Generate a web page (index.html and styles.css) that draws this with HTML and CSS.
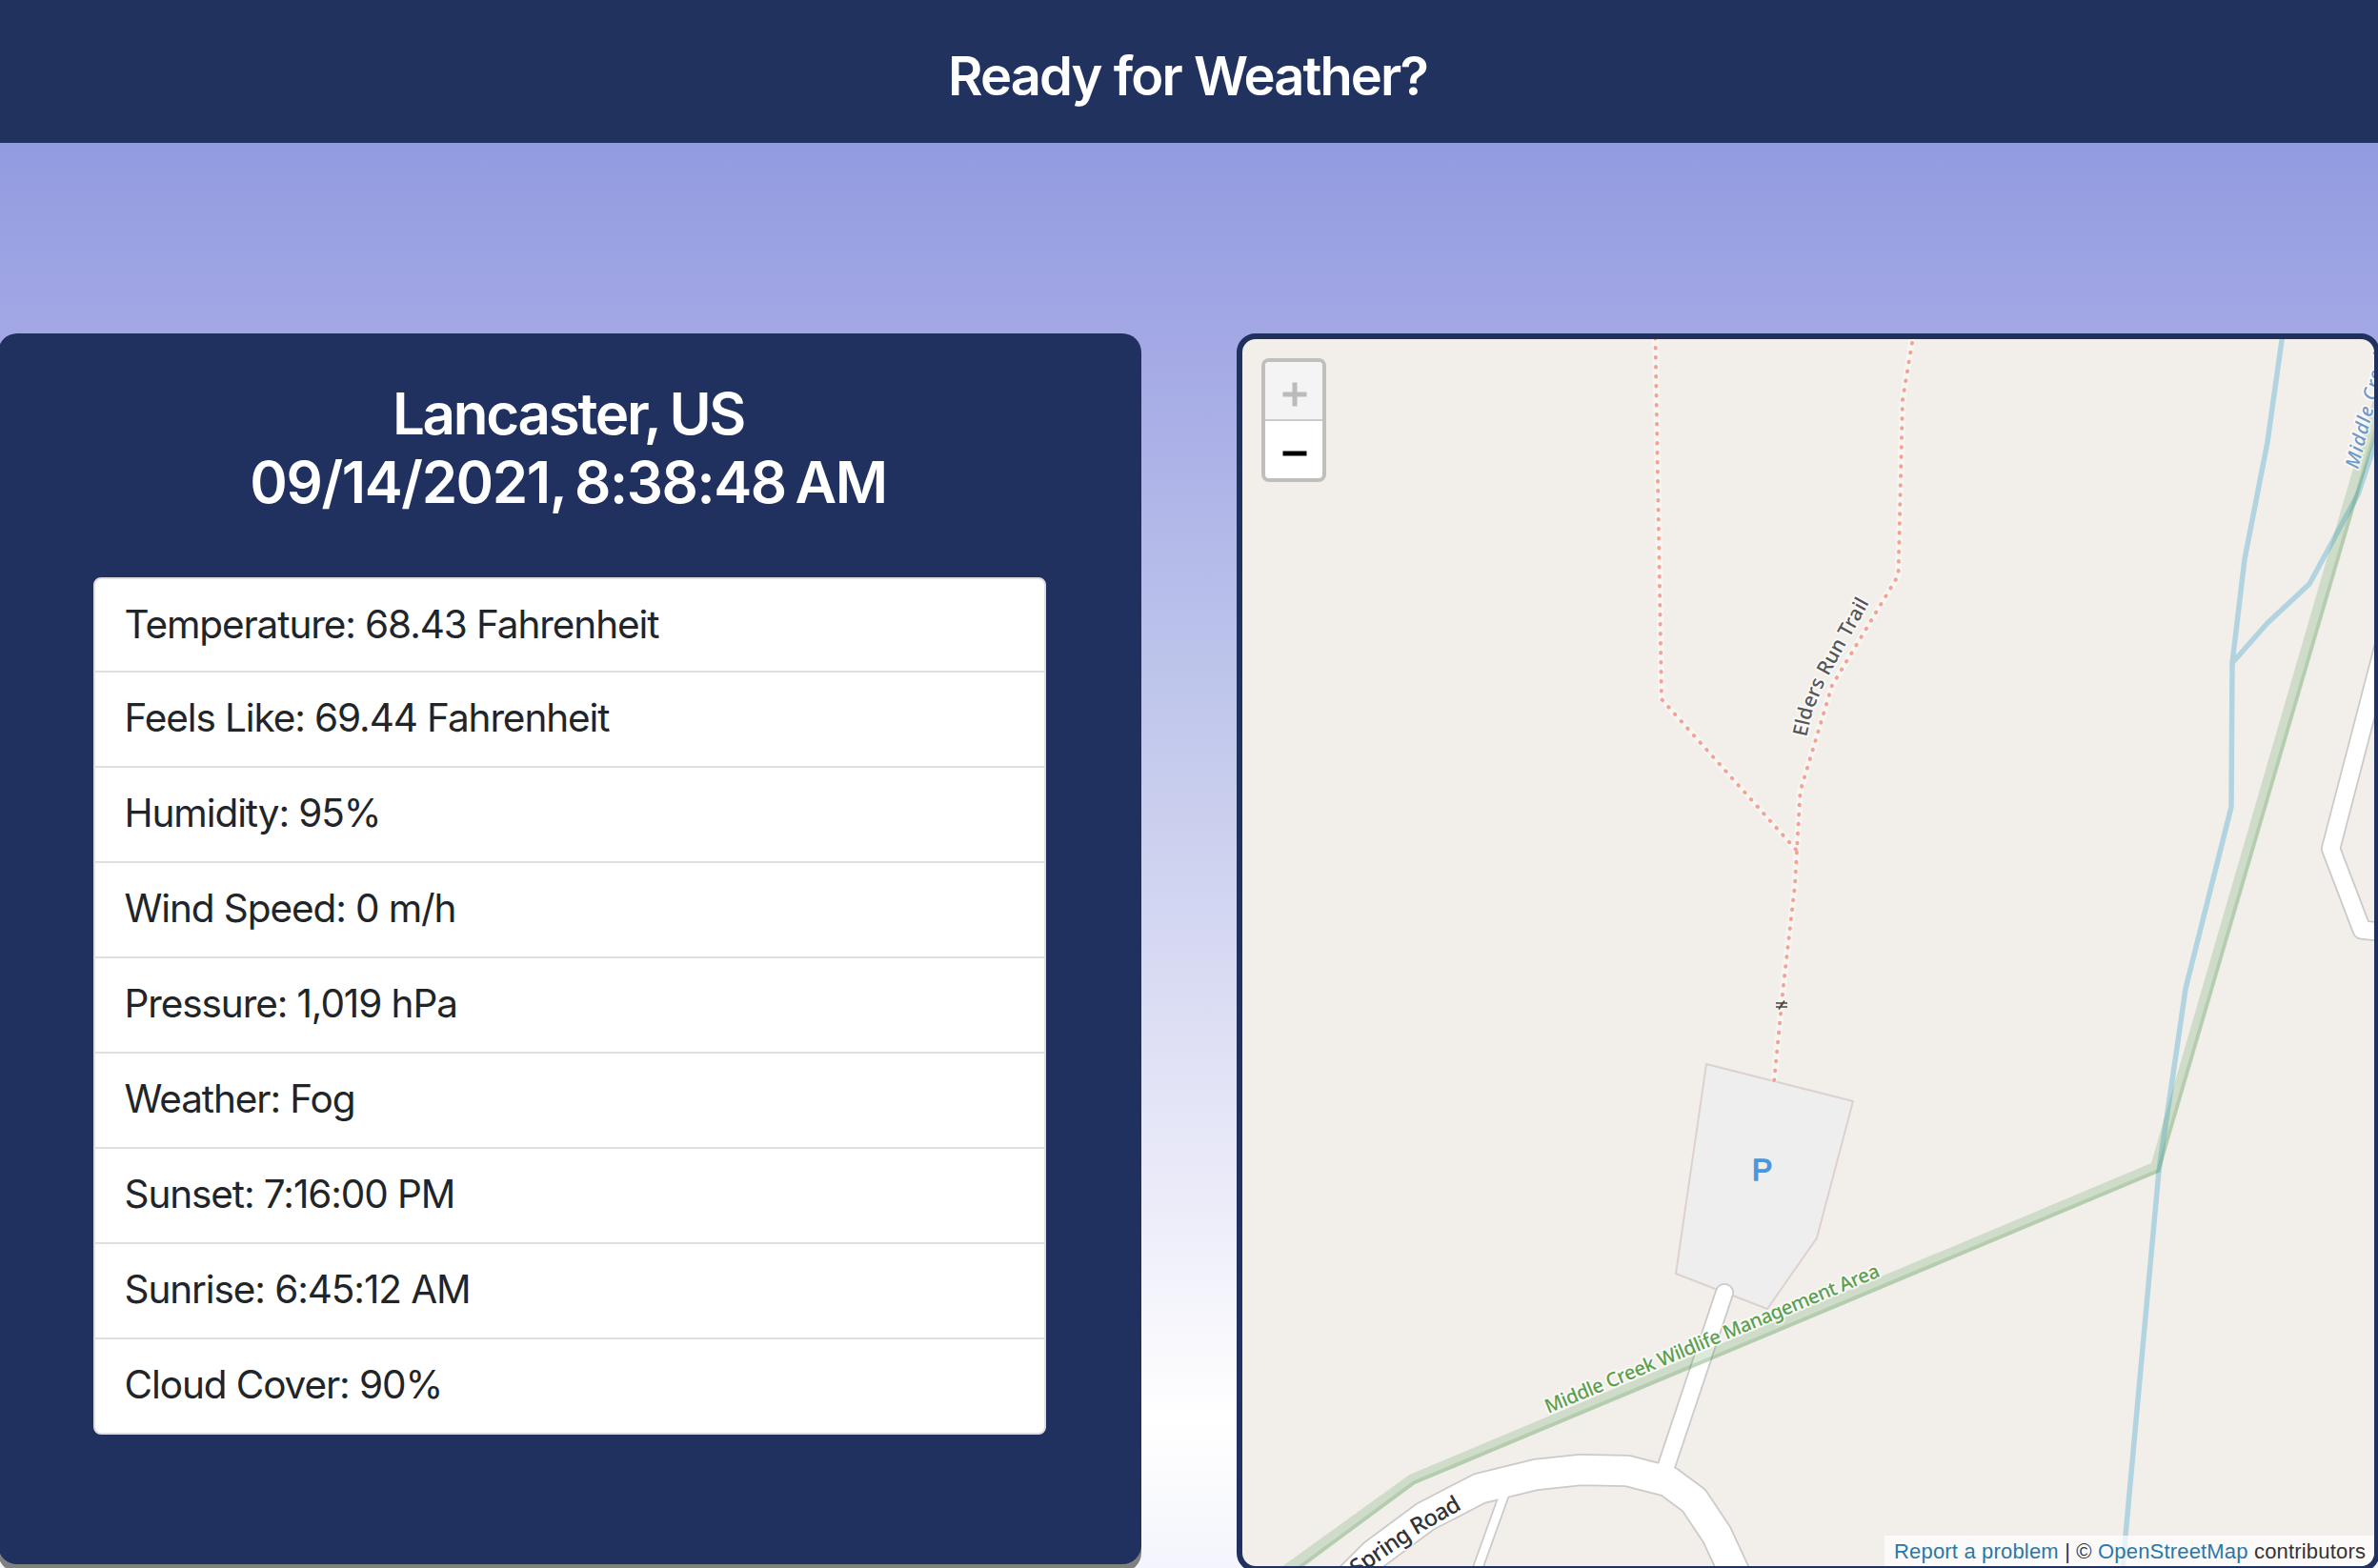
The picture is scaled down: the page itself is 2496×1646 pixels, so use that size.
FILE: index.html
```html
<!DOCTYPE html>
<html lang="en">
<head>
<meta charset="utf-8">
<title>Ready for Weather?</title>
<link rel="stylesheet" href="styles.css">
</head>
<body>
<header class="header"><h1 class="header-title">Ready for Weather?</h1></header>
<main class="content">
  <section class="weather-card">
    <h2 class="weather-heading"><span class="place">Lancaster, US</span><br><span class="date">09/14/2021, 8:38:48 AM</span></h2>
    <ul class="weather-list">
      <li>Temperature: 68.43 Fahrenheit</li>
      <li>Feels Like: 69.44 Fahrenheit</li>
      <li>Humidity: 95%</li>
      <li>Wind Speed: 0 m/h</li>
      <li>Pressure: 1,019 hPa</li>
      <li>Weather: Fog</li>
      <li>Sunset: 7:16:00 PM</li>
      <li>Sunrise: 6:45:12 AM</li>
      <li>Cloud Cover: 90%</li>
    </ul>
  </section>
  <section class="map-card">
    <svg class="map" viewBox="1304 356 1188 1288" preserveAspectRatio="xMinYMin slice">
      <defs>
        <path id="trail-label" d="M1896 774 L1902 748 L1915 717 L1968 622"/>
        <path id="road-label" d="M1424 1655 L1491 1609 L1552 1574"/>
        <path id="area-label" d="M1625 1484 L1985 1335"/>
        <path id="creek-label" d="M2475 493 L2500 395 L2520 320"/>
      </defs>
      <g class="stream">
        <path d="M2396 350 L2380 464 L2356 587 L2343 696 L2342 847 L2294 1038 L2285 1100 L2266 1229 L2231 1612 L2228 1650"/>
        <path d="M2343 696 L2380 654 L2424 613 L2475 519 L2500 445"/>
      </g>
      <path class="parking" d="M1791 1117 L1945 1156 L1907 1299.500 L1855 1374 L1759 1337 Z"/>
      <g class="road-case">
        <path class="w-main" d="M1415 1659 L1442 1632 L1496 1592 L1553 1562.500 L1612 1548 L1659 1543 L1708 1544 L1751 1555 L1778 1575 L1802 1611 L1822 1654"/>
        <path class="w-drive" d="M1810 1357 L1747 1545"/>
        <path class="w-side" d="M1582 1560 L1549 1652"/>
        <path class="w-right" d="M2512 640 L2446.500 891 L2479 976 L2515 980"/>
      </g>
      <g class="road">
        <path class="w-main" d="M1415 1659 L1442 1632 L1496 1592 L1553 1562.500 L1612 1548 L1659 1543 L1708 1544 L1751 1555 L1778 1575 L1802 1611 L1822 1654"/>
        <path class="w-drive" d="M1810 1357 L1747 1545"/>
        <path class="w-side" d="M1582 1560 L1549 1652"/>
        <path class="w-right" d="M2512 640 L2446.500 891 L2479 976 L2515 980"/>
      </g>
      <g class="trail-case">
        <path d="M1737.500 350 L1744 734 L1886 893"/>
        <path d="M2008 350 L1997 419.500 L1992.500 604 L1923 719.500 L1889.500 831 L1886 893 L1884 929 L1872 1034 L1862 1136"/>
      </g>
      <g class="trail">
        <path d="M1737.500 355 L1744 734 L1886 893"/>
        <path d="M2007 360 L1997 419.500 L1992.500 604 L1923 719.500 L1889.500 831 L1886 893 L1884 929 L1872 1034 L1862 1136"/>
      </g>
      <path class="area-band" d="M1353 1655 L1485 1558 L2266.500 1230.500 L2513 390 L2499.500 390 L2258 1221 L1479.500 1548 L1331 1655 Z"/>
      <path class="area-edge" d="M1351 1655 L1484 1556.500 L2265.500 1229 L2511.500 390"/>
      <path class="gate" d="M1864 1053 H1876 M1864 1057 H1876 M1867 1059.500 L1873 1050.500"/>
      <text class="label parking-label" x="1839" y="1239">P</text>
      <text class="label trail-label"><textPath href="#trail-label" textLength="157">Elders Run Trail</textPath></text>
      <text class="label area-label"><textPath href="#area-label" textLength="378">Middle Creek Wildlife Management Area</textPath></text>
      <text class="label road-label"><textPath href="#road-label" textLength="132">Spring Road</textPath></text>
      <text class="label creek-label"><textPath href="#creek-label">Middle Creek</textPath></text>
    </svg>
    <div class="zoom-control">
      <span class="zoom-button disabled"><svg viewBox="0 0 60 60"><path d="M18.500 34H43.500M31 21.500V46.500"/></svg></span>
      <span class="zoom-button"><svg viewBox="0 0 60 60"><path d="M18.500 34H43.500"/></svg></span>
    </div>
    <div class="attribution"><a>Report a problem</a> | © <a>OpenStreetMap</a> contributors</div>
  </section>
</main>
</body>
</html>
```

FILE: styles.css
```css
* { box-sizing: border-box; }
html, body { margin: 0; height: 1646px; overflow: hidden; }
body {
  font-family: Inter, "Liberation Sans", sans-serif;
  color: #212529;
  background: linear-gradient(#8b95de 0, #929be0 150px, #a3a8e5 350px, #bec5eb 710px, #dadcf3 1040px, #eeeefa 1290px, #ffffff 1490px, #f4f5fc 1646px);
}
.header { height: 150px; display: flex; justify-content: center; background: #21325f; }
.header-title { margin: 0; padding: 46px 3px 0 0; font-size: 56px; line-height: 68px; font-weight: 600; color: #fff; letter-spacing: -1.900px; word-spacing: 1px; white-space: nowrap; }
.content { display: flex; justify-content: center; gap: 100px; padding-top: 200px; height: 1500px; }
.weather-card { flex: none; width: 1200px; height: 1292px; padding: 48px 100px 0; border-radius: 20px; background: #20315f; box-shadow: 0 8px 0 #808080; }
.weather-heading { margin: 0; padding: 0 3px 0 0; height: 208px; text-align: center; font-size: 60px; line-height: 72px; font-weight: 600; color: #fff; white-space: nowrap; }
.place { letter-spacing: -2.250px; word-spacing: -2px; }
.date { letter-spacing: -1.400px; word-spacing: -4px; }
.weather-list { margin: 0; padding: 0; list-style: none; height: 900px; border: 2px solid #dfdfdf; border-radius: 8px; background: #fff; overflow: hidden; }
.weather-list li { height: 100px; padding: 17px 30.500px 0; border-bottom: 2px solid #dfdfdf; font-size: 40.500px; line-height: 61px; letter-spacing: -1.1px; white-space: nowrap; }
.weather-list li:first-child { height: 98px; }
.weather-list li:last-child { border-bottom: 0; }
.map-card { position: relative; flex: none; width: 1200px; height: 1300px; border: 6px solid #20315f; border-radius: 20px; background: #f2efea; overflow: hidden; }
.map { display: block; width: 1188px; height: 1288px; }
.map path { fill: none; }
.stream path { stroke: #b1d4e0; stroke-width: 5.500px; stroke-linejoin: round; }
.map .parking { fill: #eeeeee; stroke: #dcd1ce; stroke-width: 2px; }
.road-case path, .road path { stroke-linecap: round; stroke-linejoin: round; }
.road-case path { stroke: #cbcac8; }
.road-case .w-main { stroke-width: 34px; }
.road-case .w-drive { stroke-width: 20px; }
.road-case .w-side { stroke-width: 12px; }
.road-case .w-right { stroke-width: 21px; }
.road path { stroke: #fff; }
.road .w-main { stroke-width: 30.500px; }
.road .w-drive { stroke-width: 16.500px; }
.road .w-side { stroke-width: 8.500px; }
.road .w-right { stroke-width: 17.500px; }
.trail-case path { stroke: #ffffff; stroke-opacity: .4; stroke-width: 7px; }
.trail path { stroke: #f3a396; stroke-width: 4px; stroke-linecap: round; stroke-dasharray: 0.500 9.500; }
.map .area-band { fill: rgba(72, 144, 68, .2); }
.map .area-edge { stroke: rgba(72, 144, 68, .2); stroke-width: 4px; }
.map .gate { stroke: #444; stroke-width: 1.600px; }
.label { font-family: "Noto Sans", sans-serif; paint-order: stroke; stroke: rgba(255, 255, 255, .6); stroke-width: 4px; stroke-linejoin: round; }
.parking-label { font-family: "Liberation Sans", sans-serif; font-size: 32px; fill: #4898db; stroke: #4898db; stroke-width: 1.400px; }
.trail-label { font-size: 21px; font-weight: 500; fill: #555; }
.area-label { font-size: 20.500px; font-weight: 500; fill: #5b9f4f; }
.road-label { font-size: 24px; font-weight: 500; fill: #333; }
.creek-label { font-size: 20px; font-style: italic; font-weight: 500; fill: #6f98c6; letter-spacing: 1px; }
.zoom-control { position: absolute; left: 20px; top: 20px; width: 68px; height: 130px; border: 4px solid rgba(0, 0, 0, .2); border-radius: 8px; background: #fff; background-clip: padding-box; overflow: hidden; }
.zoom-button { display: block; height: 60px; }
.zoom-button svg { display: block; width: 60px; height: 60px; }
.zoom-button path { fill: none; stroke: #000; stroke-width: 5px; }
.zoom-button.disabled { height: 62px; background: #f4f4f4; border-bottom: 2px solid #ccc; }
.zoom-button.disabled path { stroke: #bbb; }
.attribution { position: absolute; right: 0; bottom: 0; width: 514px; height: 32px; padding: 0 11px 0 10px; background: rgba(255, 255, 255, .7); font-family: "Liberation Sans", Arial, sans-serif; font-size: 22px; line-height: 34px; letter-spacing: .18px; color: #333; text-align: right; white-space: nowrap; }
.attribution a { color: #2a78a6; }
```
